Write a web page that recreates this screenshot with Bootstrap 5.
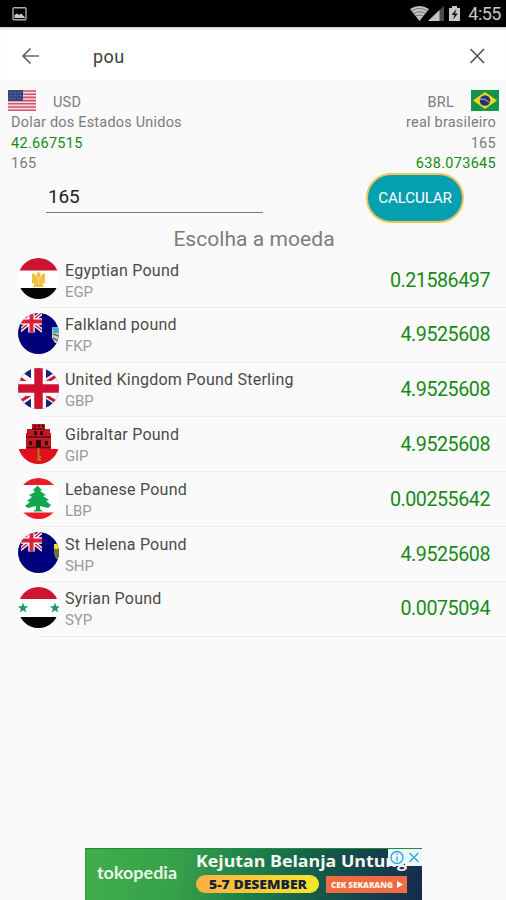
<!DOCTYPE html>
<html lang="pt-BR">
<head>
<meta charset="utf-8">
<meta name="viewport" content="width=device-width, initial-scale=1">
<title>Conversor de moedas</title>
<link href="https://cdn.jsdelivr.net/npm/bootstrap@5.3.0/dist/css/bootstrap.min.css" rel="stylesheet">
<style>
body{font-family:Roboto,"Noto Sans",sans-serif;background:#fafafa;width:506px;height:900px;overflow:hidden;color:#7c7c7c;line-height:1}
svg{display:block;flex:none}
.statusbar{height:27px;background:#000;color:#c8c8c8;padding:0 5px 0 12px}
.clock{font-size:18px;letter-spacing:-.5px;line-height:27px}
.toolbar{height:55px;background:#fff;border-bottom:1px solid #f5f5f5;box-shadow:inset 0 3px 3px -2px #bbb;padding:3px 19px 0 20px}
.query{font-size:18px;color:#3c3c3c;letter-spacing:.5px;margin-left:53px;padding-top:2px}
.pair{height:91px;padding-top:8px;font-size:14.5px;letter-spacing:.2px}
.side{line-height:20.3px}
.code-line{height:23.4px;line-height:25px;gap:17px}
.left-text{padding-left:11px}
.right-text{padding-right:10px}
.digits{letter-spacing:.3px}
.green{color:#168a16}
.flag-end{margin-right:7px}
.amount{width:217px;height:32px;margin-left:46px;border:0;border-bottom:1px solid #777;background:none;color:#222;font-size:19px;letter-spacing:-.2px;padding:0 0 1px 2px;outline:0;line-height:30px}
.entry{height:51px}
.calc{width:98px;height:50px;margin-right:42px;border:2px solid #eec55c;border-radius:25px;background:#05a0b0;color:#fff;font-size:15.2px;padding:0;letter-spacing:-.15px}
.heading{height:29px;line-height:31px;font-size:21px;letter-spacing:.05px;padding-left:2px}
.money{height:54.8px;padding:0 16px 0 18px;background:linear-gradient(#ececec,#ececec) 40px 100%/100% 1px no-repeat}
.money>svg{margin-bottom:3px}
.label{margin-left:6px;padding-top:1.5px}
.name{font-size:16px;color:#4a4a4a;line-height:21px;letter-spacing:.24px}
.abbr{font-size:15px;color:#9a9a9a;line-height:22px;letter-spacing:-.1px}
.rate{font-size:19.7px;letter-spacing:-.47px}
.ad{width:337px;height:52px;background:linear-gradient(100deg,#3fae49 0%,#36a04a 28%,#1b7a4b 52%,#14504b 75%,#17294f 100%);font-family:"Open Sans",sans-serif;border-top:1px solid #1e8c3c;border-left:1px solid #21a03c}
</style>
</head>
<body class="d-flex flex-column position-relative">
<svg width="0" height="0" class="position-absolute"><defs>
<clipPath id="disc"><circle cx="20.5" cy="20.5" r="20.5"/></clipPath>
<clipPath id="canton"><rect x="3" width="21" height="19.500"/></clipPath>
<path id="star" d="M0-5.5L1.3-1.7H5.3L2.1.7 3.3 4.5 0 2.2-3.3 4.5-2.1.7-5.3-1.7H-1.3Z"/>
<g id="ensign"><rect width="41" height="41" fill="#00007b"/><g clip-path="url(#canton)" fill="none">
<path d="M0-2L26 19M26-2L0 19" stroke="#fff" stroke-width="4"/><path d="M0-2L26 19M26-2L0 19" stroke="#d8203a" stroke-width="1.500"/>
<path d="M13.500 0V20M3 8.500H24" stroke="#fff" stroke-width="6.500"/><path d="M13.500 0V20M3 8.500H24" stroke="#d8203a" stroke-width="4"/></g></g>
</defs></svg>

<header class="statusbar d-flex align-items-center justify-content-between">
<svg width="16" height="14" viewBox="0 0 16 14"><rect x="1" y=".8" width="13" height="12" rx="1" fill="none" stroke="#aaa" stroke-width="1.4"/><path d="M2.500 11V8L5 6.500 7 8 9 6.500 13 10.500V11Z" fill="#ccc"/></svg>
<div class="d-flex align-items-center">
<svg width="54" height="18" viewBox="0 0 54 18"><path d="M0 4Q9.500-2 19 4L9.500 16Z" fill="#c4c4c4"/><path d="M1.500 6Q9.500 1 17.500 6M3.500 8.500Q9.500 5 15.500 8.500M5.500 11Q9.500 9 13.500 11" fill="none" stroke="#555" stroke-width=".8"/><path d="M18 16L34 1V16Z" fill="#4b4b4b"/><path d="M18 16L29.500 5V16Z" fill="#c4c4c4"/><path d="M39 3H42V1H47V3H50V16H39Z" fill="#c8c8c8"/><path d="M46.500 4L41.500 10H44.500L43 14.500 48 8.500H45Z" fill="#111"/></svg>
<span class="clock ms-1">4:55</span></div>
</header>

<nav class="toolbar d-flex align-items-center">
<svg width="20" height="20" viewBox="0 0 20 20" fill="none" stroke="#666" stroke-width="1.7"><path d="M19 10H3M10.500 2.500L3 10 10.500 17.500"/></svg>
<span class="query">pou</span>
<svg class="ms-auto" width="20" height="20" viewBox="0 0 20 20" fill="none" stroke="#555" stroke-width="1.700"><path d="M3.500 3L17 17M17 3L3.500 17"/></svg>
</nav>

<section class="pair d-flex justify-content-between">
<div class="side">
<div class="code-line d-flex"><svg class="ms-2" width="28" height="21" viewBox="0 0 28 21"><rect width="28" height="21" fill="#f4dce2"/><path d="M0 1H28M0 4.200H28M0 7.400H28M0 10.600H28M0 13.800H28M0 17H28M0 20.200H28" stroke="#d5506a" stroke-width="1.600"/><rect width="15" height="11" fill="#34477f"/><path d="M2 2.500H14M2 5.500H14M2 8.500H14" stroke="#7482ae" stroke-width=".8" stroke-dasharray="1 1.500"/></svg><span>USD</span></div>
<div class="left-text">Dolar dos Estados Unidos</div><div class="left-text digits green">42.667515</div><div class="left-text digits">165</div>
</div>
<div class="side text-end">
<div class="code-line d-flex justify-content-end"><span>BRL</span><svg class="flag-end" width="28" height="21" viewBox="0 0 28 21"><rect width="28" height="21" fill="#139447"/><path d="M2 10.500L14 2 26 10.500 14 19Z" fill="#f2d51e"/><circle cx="14" cy="10.500" r="5.300" fill="#26306f"/><path d="M9 9Q14 8 18.500 12.500" fill="none" stroke="#b8c3d8" stroke-width="1"/></svg></div>
<div class="right-text">real brasileiro</div><div class="right-text digits">165</div><div class="right-text digits green">638.073645</div>
</div>
</section>

<form class="entry d-flex align-items-start justify-content-between">
<input class="amount mt-2" value="165" aria-label="Valor">
<button type="button" class="calc btn">CALCULAR</button>
</form>

<h1 class="heading fw-normal text-center m-0">Escolha a moeda</h1>

<main>
<div class="money d-flex align-items-center"><svg width="41" height="41" viewBox="0 0 41 41"><g clip-path="url(#disc)"><rect width="41" height="41" fill="#fff"/><rect width="41" height="12.500" fill="#ce1430"/><rect y="30" width="41" height="11" fill="#050505"/><path d="M14 15L18.500 17.500 19 14.500H22L22.500 17.500 27 15V25.500L24.500 25 26 29H15L16.500 25 14 25.500Z" fill="#f0c03e"/><path d="M18 18L20.500 22 23 18M20.500 22V26" fill="none" stroke="#fff3c5" stroke-width=".8"/></g></svg><div class="label"><div class="name">Egyptian Pound</div><div class="abbr">EGP</div></div><span class="rate green ms-auto">0.21586497</span></div>
<div class="money d-flex align-items-center"><svg width="41" height="41" viewBox="0 0 41 41"><g clip-path="url(#disc)"><use href="#ensign"/><path d="M34 14H41V30H37L34 25Z" fill="#c8d3c9"/><path d="M34 14H41V20H35Z" fill="#4ea7d4"/><path d="M35 21L41 23M35 25L41 28" stroke="#5d6d4a" stroke-width="1.500"/></g></svg><div class="label"><div class="name">Falkland pound</div><div class="abbr">FKP</div></div><span class="rate green ms-auto">4.9525608</span></div>
<div class="money d-flex align-items-center"><svg width="41" height="41" viewBox="0 0 41 41"><g clip-path="url(#disc)"><rect width="41" height="41" fill="#10247c"/><path d="M-11 0L52 41M52 0L-11 41" stroke="#fff" stroke-width="9"/><path d="M-11 2L20 22M52-1L21 19M-11 42L20 22M52 43L21 23" stroke="#d01838" stroke-width="3"/><path d="M20.500 0V41M0 20.500H41" stroke="#fff" stroke-width="15"/><path d="M20.500 0V41M0 20.500H41" stroke="#d01030" stroke-width="8.500"/></g></svg><div class="label"><div class="name">United Kingdom Pound Sterling</div><div class="abbr">GBP</div></div><span class="rate green ms-auto">4.9525608</span></div>
<div class="money d-flex align-items-center"><svg width="41" height="41" viewBox="0 0 41 41"><g clip-path="url(#disc)"><rect width="41" height="41" fill="#fff"/><rect y="26" width="41" height="15" fill="#e1101c"/><path d="M8 26V10H9V6H14V1H27V6H32V10H33V26Z" fill="#c51722"/><path d="M8 14H33M14 6H27M9 24.500H33" stroke="#5d0d12" stroke-width="1.300"/><path d="M11 22V18H14V22ZM18 24V17H23V24ZM27 22V18H30V22ZM16 12V8H19V12ZM22 12V8H25V12ZM16 4V2H18V4ZM20 4V2H22V4ZM24 4V2H26V4Z" fill="#250c0e"/><path d="M20.500 25V38M20.500 34H23M20.500 37H23" stroke="#a77a21" stroke-width="2"/></g></svg><div class="label"><div class="name">Gibraltar Pound</div><div class="abbr">GIP</div></div><span class="rate green ms-auto">4.9525608</span></div>
<div class="money d-flex align-items-center"><svg width="41" height="41" viewBox="0 0 41 41"><g clip-path="url(#disc)"><rect width="41" height="41" fill="#fff"/><rect width="41" height="7" fill="#ec1c24"/><rect y="34.500" width="41" height="7" fill="#ec1c24"/><path d="M19.500 7.500L24 12 22 13 28 17 25 18 31 22 28 23 33 27 30 30 22 28 22 31 25 33.500H15L18 31 18 28 10 30 7 28 12 24 9 23 14 19 11 17 17 14 15 12Z" fill="#12a650"/></g></svg><div class="label"><div class="name">Lebanese Pound</div><div class="abbr">LBP</div></div><span class="rate green ms-auto">0.00255642</span></div>
<div class="money d-flex align-items-center"><svg width="41" height="41" viewBox="0 0 41 41"><g clip-path="url(#disc)"><use href="#ensign"/><path d="M36 12H41V27H38L36 22Z" fill="#69773a"/><path d="M36 12H41V17H36Z" fill="#f2df22"/></g></svg><div class="label"><div class="name">St Helena Pound</div><div class="abbr">SHP</div></div><span class="rate green ms-auto">4.9525608</span></div>
<div class="money d-flex align-items-center"><svg width="41" height="41" viewBox="0 0 41 41"><g clip-path="url(#disc)"><rect width="41" height="41" fill="#fff"/><rect width="41" height="12" fill="#ce1430"/><rect y="30" width="41" height="11" fill="#050505"/><use href="#star" x="5" y="21" fill="#159b63"/><use href="#star" x="37" y="21" fill="#159b63"/></g></svg><div class="label"><div class="name">Syrian Pound</div><div class="abbr">SYP</div></div><span class="rate green ms-auto">0.0075094</span></div>
</main>

<footer class="ad mt-auto mx-auto">
<svg width="336" height="51" viewBox="0 0 336 51">
<text x="11" y="30" font-family="Lato,sans-serif" font-size="17.500" font-weight="700" fill="#e9f7e6" textLength="80" lengthAdjust="spacingAndGlyphs">tokopedia</text>
<text x="110" y="18" font-size="16.500" font-weight="700" fill="#f4faf2" textLength="211" lengthAdjust="spacingAndGlyphs">Kejutan Belanja Untung</text>
<defs><linearGradient id="gold"><stop stop-color="#fbb040"/><stop offset="1" stop-color="#f5e62c"/></linearGradient></defs>
<rect x="110" y="26" width="123" height="18" rx="9" fill="url(#gold)"/>
<text x="123" y="40" font-size="12.500" font-weight="800" fill="#17203c" textLength="98" lengthAdjust="spacingAndGlyphs">5-7 DESEMBER</text>
<rect x="240" y="27" width="81" height="17" fill="#ef6c42"/>
<text x="245" y="38.500" font-size="8" font-weight="800" fill="#fff3e8" textLength="62" lengthAdjust="spacingAndGlyphs">CEK SEKARANG</text><path d="M311 32L317 35.500 311 39Z" fill="#fff"/>
<path d="M302 0H336V17H319V13Q318 17 314 17H302Z" fill="#eef7fa"/>
<g fill="none" stroke="#27a9d6" stroke-width="1.300"><circle cx="311" cy="8.500" r="6"/><path d="M311 7.500V12M311 4.500V6M323.500 4L332.500 13M332.500 4L323.500 13"/></g>
</svg>
</footer>
<script src="https://cdn.jsdelivr.net/npm/bootstrap@5.3.0/dist/js/bootstrap.bundle.min.js"></script>
</body>
</html>
